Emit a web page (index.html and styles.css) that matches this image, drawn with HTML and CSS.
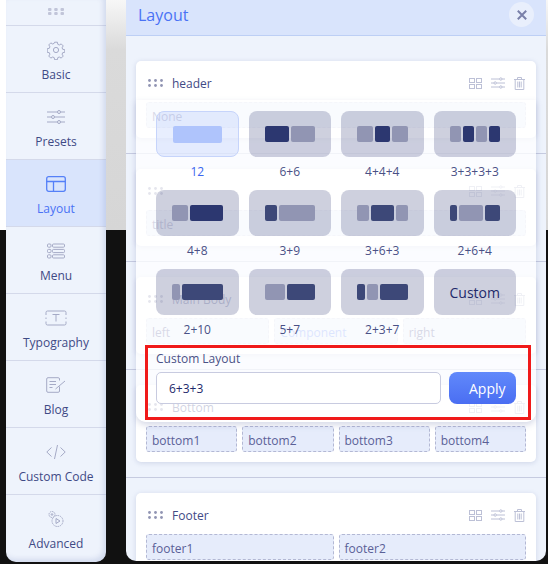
FILE: index.html
```html
<!DOCTYPE html>
<html lang="en">
<head>
    <meta charset="UTF-8">
    <title>Layout</title>
    <link rel="stylesheet" href="styles.css">
</head>
<body>
    <div class="shell">
        <nav class="sidebar">
            <div class="side-drag">
                <svg width="16" height="7" viewBox="0 0 16 7" fill="#c1c5d9"><rect width="3.5" height="3" rx="1"/><rect x="6.2" width="3.5" height="3" rx="1"/><rect x="12.5" width="3.5" height="3" rx="1"/><rect y="4" width="3.5" height="3" rx="1"/><rect x="6.2" y="4" width="3.5" height="3" rx="1"/><rect x="12.5" y="4" width="3.5" height="3" rx="1"/></svg>
            </div>
            <a class="side-item">
                <svg class="side-icon" width="18" height="18" viewBox="0 0 18 18"><path d="M7.6 1.2h2.8l.4 2.1 1.5.7 1.9-1.1 2 2-1.1 1.9.6 1.5 2.1.4v2.6l-2.1.4-.6 1.5 1.1 1.9-2 2-1.9-1.1-1.5.6-.4 2.1H7.6l-.4-2.1-1.5-.6-1.9 1.1-2-2 1.1-1.9-.6-1.5-2.1-.4V7.7l2.1-.4.6-1.5-1.1-1.9 2-2 1.9 1.1 1.5-.7z"/><circle cx="9" cy="9" r="2.6"/></svg>
                <span>Basic</span>
            </a>
            <a class="side-item">
                <svg class="side-icon" width="20" height="16" viewBox="0 0 20 16"><path d="M1 3h10.500M14.500 3H19M1 8h4.500M8.500 8H19M1 13h10.500M14.500 13H19"/><circle cx="13" cy="3" r="1.500"/><circle cx="7" cy="8" r="1.500"/><circle cx="13" cy="13" r="1.500"/></svg>
                <span>Presets</span>
            </a>
            <a class="side-item active">
                <svg class="side-icon" width="20" height="16" viewBox="0 0 20 16"><rect x=".7" y=".7" width="18.600" height="14.600" rx="2"/><path d="M.7 5.500h18.600M7.500 5.500v9.800"/></svg>
                <span>Layout</span>
            </a>
            <a class="side-item">
                <svg class="side-icon" width="18" height="16" viewBox="0 0 18 16"><rect x=".5" y="1" width="3.500" height="3.200" rx="1"/><rect x=".5" y="6.400" width="3.500" height="3.200" rx="1"/><rect x=".5" y="11.800" width="3.500" height="3.200" rx="1"/><rect x="5.500" y="1" width="12" height="3.200" rx="1"/><rect x="5.500" y="6.400" width="12" height="3.200" rx="1"/><rect x="5.500" y="11.800" width="12" height="3.200" rx="1"/></svg>
                <span>Menu</span>
            </a>
            <a class="side-item">
                <svg class="side-icon" width="22" height="16" viewBox="0 0 22 16"><path d="M1 5V2.500Q1 1 2.500 1h17Q21 1 21 2.500V5M1 7.500v1.500M21 7.500v1.500M1 11.500v2Q1 15 2.500 15h17q1.500 0 1.500-1.500v-2M7.500 4.500h7M11 4.500v7"/></svg>
                <span>Typography</span>
            </a>
            <a class="side-item">
                <svg class="side-icon" width="20" height="16" viewBox="0 0 20 16"><path d="M13.500 9.500v4.500q0 1.300-1.300 1.300H2q-1.300 0-1.300-1.300V2Q.7.700 2 .7h10.200q1.300 0 1.300 1.300v1.500M3.500 4.500h6.500M3.500 7.500h6.500M3.500 10.500h3M9.500 12l9.500-8"/></svg>
                <span>Blog</span>
            </a>
            <a class="side-item">
                <svg class="side-icon" width="20" height="16" viewBox="0 0 20 16"><path d="M5.500 3.500L.8 8l4.700 4.500M14.500 3.500L19.200 8l-4.700 4.500M11.500 1L8.500 15"/></svg>
                <span>Custom Code</span>
            </a>
            <a class="side-item">
                <svg class="side-icon" width="16" height="17" viewBox="0 0 16 17"><circle cx="4" cy="4" r="3" stroke-dasharray="1.500 .8"/><circle cx="4" cy="4" r=".8"/><circle cx="9.500" cy="10.500" r="5.500" stroke-dasharray="1.500 .8"/><path d="M8 8v5l4-2.500z"/></svg>
                <span>Advanced</span>
            </a>
        </nav>

        <main class="panel">
            <header class="panel-head">
                <h1>Layout</h1>
                <button class="close-btn" type="button">
                    <svg width="10" height="10" viewBox="0 0 10 10"><path d="M.8.800l8.400 8.400M9.200.800L.8 9.200"/></svg>
                </button>
            </header>

            <section class="section">
                <div class="card">
                    <div class="card-head">
                        <svg class="drag" width="15" height="8" viewBox="0 0 15 8"><circle cx="1.500" cy="1.500" r="1.400"/><circle cx="7.500" cy="1.500" r="1.400"/><circle cx="13.500" cy="1.500" r="1.400"/><circle cx="1.500" cy="6.500" r="1.400"/><circle cx="7.500" cy="6.500" r="1.400"/><circle cx="13.500" cy="6.500" r="1.400"/></svg>
                        <span class="card-title">header</span>
                        <div class="card-tools">
                            <svg width="13" height="11" viewBox="0 0 13 11"><rect x=".5" y=".5" width="5" height="4"/><rect x="7.500" y=".5" width="5" height="4"/><rect x=".5" y="6.500" width="5" height="4"/><rect x="7.500" y="6.500" width="5" height="4"/></svg>
                            <svg width="14" height="12" viewBox="0 0 14 12"><path d="M0 2h8.500M11 2h3M0 6h3M5.500 6H14M0 10h8.500M11 10h3"/><circle cx="9.800" cy="2" r="1.200"/><circle cx="4.200" cy="6" r="1.200"/><circle cx="9.800" cy="10" r="1.200"/></svg>
                            <svg width="11" height="13" viewBox="0 0 11 13"><path d="M0 2.500h11M3.500 2.500V.5h4v2M1.200 2.500v10h8.600v-10M3.800 4.500v6M5.500 4.500v6M7.200 4.500v6"/></svg>
                        </div>
                    </div>
                    <div class="slots"><div class="slot empty">None</div></div>
                </div>
            </section>

            <section class="section">
                <div class="card">
                    <div class="card-head">
                        <svg class="drag" width="15" height="8" viewBox="0 0 15 8"><circle cx="1.500" cy="1.500" r="1.400"/><circle cx="7.500" cy="1.500" r="1.400"/><circle cx="13.500" cy="1.500" r="1.400"/><circle cx="1.500" cy="6.500" r="1.400"/><circle cx="7.500" cy="6.500" r="1.400"/><circle cx="13.500" cy="6.500" r="1.400"/></svg>
                        <div class="card-tools">
                            <svg width="13" height="11" viewBox="0 0 13 11"><rect x=".5" y=".5" width="5" height="4"/><rect x="7.500" y=".5" width="5" height="4"/><rect x=".5" y="6.500" width="5" height="4"/><rect x="7.500" y="6.500" width="5" height="4"/></svg>
                            <svg width="14" height="12" viewBox="0 0 14 12"><path d="M0 2h8.500M11 2h3M0 6h3M5.500 6H14M0 10h8.500M11 10h3"/><circle cx="9.800" cy="2" r="1.200"/><circle cx="4.200" cy="6" r="1.200"/><circle cx="9.800" cy="10" r="1.200"/></svg>
                            <svg width="11" height="13" viewBox="0 0 11 13"><path d="M0 2.500h11M3.500 2.500V.5h4v2M1.200 2.500v10h8.600v-10M3.800 4.500v6M5.500 4.500v6M7.200 4.500v6"/></svg>
                        </div>
                    </div>
                    <div class="slots"><div class="slot empty">title</div></div>
                </div>
            </section>

            <section class="section">
                <div class="card">
                    <div class="card-head">
                        <svg class="drag" width="15" height="8" viewBox="0 0 15 8"><circle cx="1.500" cy="1.500" r="1.400"/><circle cx="7.500" cy="1.500" r="1.400"/><circle cx="13.500" cy="1.500" r="1.400"/><circle cx="1.500" cy="6.500" r="1.400"/><circle cx="7.500" cy="6.500" r="1.400"/><circle cx="13.500" cy="6.500" r="1.400"/></svg>
                        <span class="card-title">Main Body</span>
                        <div class="card-tools">
                            <svg width="13" height="11" viewBox="0 0 13 11"><rect x=".5" y=".5" width="5" height="4"/><rect x="7.500" y=".5" width="5" height="4"/><rect x=".5" y="6.500" width="5" height="4"/><rect x="7.500" y="6.500" width="5" height="4"/></svg>
                            <svg width="14" height="12" viewBox="0 0 14 12"><path d="M0 2h8.500M11 2h3M0 6h3M5.500 6H14M0 10h8.500M11 10h3"/><circle cx="9.800" cy="2" r="1.200"/><circle cx="4.200" cy="6" r="1.200"/><circle cx="9.800" cy="10" r="1.200"/></svg>
                            <svg width="11" height="13" viewBox="0 0 11 13"><path d="M0 2.500h11M3.500 2.500V.5h4v2M1.200 2.500v10h8.600v-10M3.800 4.500v6M5.500 4.500v6M7.200 4.500v6"/></svg>
                        </div>
                    </div>
                    <div class="slots">
                        <div class="slot empty">left</div>
                        <div class="slot empty component">Component</div>
                        <div class="slot empty">right</div>
                    </div>
                </div>
            </section>

            <section class="section">
                <div class="card">
                    <div class="card-head">
                        <svg class="drag" width="15" height="8" viewBox="0 0 15 8"><circle cx="1.500" cy="1.500" r="1.400"/><circle cx="7.500" cy="1.500" r="1.400"/><circle cx="13.500" cy="1.500" r="1.400"/><circle cx="1.500" cy="6.500" r="1.400"/><circle cx="7.500" cy="6.500" r="1.400"/><circle cx="13.500" cy="6.500" r="1.400"/></svg>
                        <span class="card-title">Bottom</span>
                        <div class="card-tools">
                            <svg width="13" height="11" viewBox="0 0 13 11"><rect x=".5" y=".5" width="5" height="4"/><rect x="7.500" y=".5" width="5" height="4"/><rect x=".5" y="6.500" width="5" height="4"/><rect x="7.500" y="6.500" width="5" height="4"/></svg>
                            <svg width="14" height="12" viewBox="0 0 14 12"><path d="M0 2h8.500M11 2h3M0 6h3M5.500 6H14M0 10h8.500M11 10h3"/><circle cx="9.800" cy="2" r="1.200"/><circle cx="4.200" cy="6" r="1.200"/><circle cx="9.800" cy="10" r="1.200"/></svg>
                            <svg width="11" height="13" viewBox="0 0 11 13"><path d="M0 2.500h11M3.500 2.500V.5h4v2M1.200 2.500v10h8.600v-10M3.800 4.500v6M5.500 4.500v6M7.200 4.500v6"/></svg>
                        </div>
                    </div>
                    <div class="slots">
                        <div class="slot">bottom1</div>
                        <div class="slot">bottom2</div>
                        <div class="slot">bottom3</div>
                        <div class="slot">bottom4</div>
                    </div>
                </div>
            </section>

            <section class="section">
                <div class="card">
                    <div class="card-head">
                        <svg class="drag" width="15" height="8" viewBox="0 0 15 8"><circle cx="1.500" cy="1.500" r="1.400"/><circle cx="7.500" cy="1.500" r="1.400"/><circle cx="13.500" cy="1.500" r="1.400"/><circle cx="1.500" cy="6.500" r="1.400"/><circle cx="7.500" cy="6.500" r="1.400"/><circle cx="13.500" cy="6.500" r="1.400"/></svg>
                        <span class="card-title">Footer</span>
                        <div class="card-tools">
                            <svg width="13" height="11" viewBox="0 0 13 11"><rect x=".5" y=".5" width="5" height="4"/><rect x="7.500" y=".5" width="5" height="4"/><rect x=".5" y="6.500" width="5" height="4"/><rect x="7.500" y="6.500" width="5" height="4"/></svg>
                            <svg width="14" height="12" viewBox="0 0 14 12"><path d="M0 2h8.500M11 2h3M0 6h3M5.500 6H14M0 10h8.500M11 10h3"/><circle cx="9.800" cy="2" r="1.200"/><circle cx="4.200" cy="6" r="1.200"/><circle cx="9.800" cy="10" r="1.200"/></svg>
                            <svg width="11" height="13" viewBox="0 0 11 13"><path d="M0 2.500h11M3.500 2.500V.5h4v2M1.200 2.500v10h8.600v-10M3.800 4.500v6M5.500 4.500v6M7.200 4.500v6"/></svg>
                        </div>
                    </div>
                    <div class="slots">
                        <div class="slot">footer1</div>
                        <div class="slot">footer2</div>
                    </div>
                </div>
            </section>

            <!-- layout picker popover, sits over the sections -->
            <div class="picker">
                <div class="tiles">
                    <div class="tile-wrap selected">
                        <div class="tile"><i class="span-12 soft"></i></div>
                        <span>12</span>
                    </div>
                    <div class="tile-wrap">
                        <div class="tile"><i class="span-6 deep"></i><i class="span-6 soft"></i></div>
                        <span>6+6</span>
                    </div>
                    <div class="tile-wrap">
                        <div class="tile"><i class="span-4 soft"></i><i class="span-4 deep"></i><i class="span-4 soft"></i></div>
                        <span>4+4+4</span>
                    </div>
                    <div class="tile-wrap">
                        <div class="tile"><i class="span-3 soft"></i><i class="span-3 deep"></i><i class="span-3 soft"></i><i class="span-3 deep"></i></div>
                        <span>3+3+3+3</span>
                    </div>
                    <div class="tile-wrap">
                        <div class="tile"><i class="span-4 soft"></i><i class="span-8 deep"></i></div>
                        <span>4+8</span>
                    </div>
                    <div class="tile-wrap">
                        <div class="tile"><i class="span-3 mid"></i><i class="span-9 soft"></i></div>
                        <span>3+9</span>
                    </div>
                    <div class="tile-wrap">
                        <div class="tile"><i class="span-3 soft"></i><i class="span-6 mid"></i><i class="span-3 soft"></i></div>
                        <span>3+6+3</span>
                    </div>
                    <div class="tile-wrap">
                        <div class="tile"><i class="span-2 mid"></i><i class="span-6 soft"></i><i class="span-4 mid"></i></div>
                        <span>2+6+4</span>
                    </div>
                    <div class="tile-wrap">
                        <div class="tile"><i class="span-2 soft"></i><i class="span-10 mid"></i></div>
                        <span>2+10</span>
                    </div>
                    <div class="tile-wrap">
                        <div class="tile"><i class="span-5 soft"></i><i class="span-7 mid"></i></div>
                        <span>5+7</span>
                    </div>
                    <div class="tile-wrap">
                        <div class="tile"><i class="span-2 mid"></i><i class="span-3 soft"></i><i class="span-7 mid"></i></div>
                        <span>2+3+7</span>
                    </div>
                    <div class="tile-wrap">
                        <div class="tile custom">Custom</div>
                    </div>
                </div>
                <div class="custom-label">Custom Layout</div>
                <div class="custom-row">
                    <input class="custom-input" type="text" value="6+3+3">
                    <button class="apply-btn" type="button">Apply</button>
                </div>
                <div class="callout"></div>
            </div>
        </main>
    </div>
</body>
</html>
```

FILE: styles.css
```css
* {
    box-sizing: border-box;
}

html, body {
    height: 100%;
}

body {
    margin: 0;
    overflow: hidden;
    font-family: "Open Sans", "Noto Sans", sans-serif;
    font-size: 12px;
    color: #3f4a85;
    background:
        linear-gradient(90deg, #fff 6px, transparent 6px) 0 0 / 100% 230px no-repeat,
        linear-gradient(#f7f7f7 0, #dadada 50px, #d6d6d6 230px, #111 230px);
}

.shell {
    display: flex;
    align-items: flex-start;
    gap: 20px;
    padding-left: 6px;
}

/* sidebar */
.sidebar {
    flex: none;
    width: 100px;
    height: 562px;
    overflow: hidden;
    background: #eef3fc;
    border-radius: 0 0 10px 10px;
    position: relative;
}

.sidebar::after {
    content: "";
    position: absolute;
    inset: 0;
    border-radius: 0 0 10px 10px;
    box-shadow: inset -3px -3px 5px rgba(120, 135, 190, .22);
    pointer-events: none;
}

.side-drag {
    height: 26px;
    padding-top: 8px;
    text-align: center;
    border-bottom: 1px solid #d4d9ea;
}

.side-drag svg {
    display: block;
    margin: 0 auto;
}

.side-item {
    display: flex;
    flex-direction: column;
    align-items: center;
    height: 67px;
    padding-top: 14px;
    border-bottom: 1px solid #d4d9ea;
    color: #3f4a85;
    line-height: 18px;
}

.side-item:last-child {
    border-bottom: none;
}

.side-item span {
    margin-top: 6px;
}

.side-icon {
    display: block;
    height: 20px;
    fill: none;
    stroke: #a5aac6;
    stroke-width: 1;
}

.side-item.active {
    background: #d9e4fc;
    color: #4a72f5;
}

.side-item.active .side-icon {
    stroke: #5580f8;
    stroke-width: 1.300;
}

/* main panel */
.panel {
    flex: none;
    position: relative;
    width: 420px;
    height: 561px;
    overflow: hidden;
    background: #eef3fc;
    border-radius: 0 0 10px 10px;
}

.panel-head {
    display: flex;
    align-items: center;
    justify-content: space-between;
    height: 36px;
    padding: 0 12px 6px;
    background: #d9e4fc;
    border-bottom: 1px solid #bdcff5;
}

.panel-head h1 {
    margin: 0;
    font-size: 16px;
    line-height: 22px;
    font-weight: 400;
    color: #4a72f5;
}

.close-btn {
    display: flex;
    align-items: center;
    justify-content: center;
    width: 25px;
    height: 25px;
    padding: 0;
    border: none;
    border-radius: 50%;
    background: #e9effc;
}

.close-btn svg {
    fill: none;
    stroke: #7a80a9;
    stroke-width: 2;
}

.section {
    padding: 15px 10px;
    border-bottom: 1px solid #c6cbe0;
}

.panel-head + .section {
    padding-top: 25px;
}

.section:last-of-type {
    border-bottom: none;
}

.card {
    height: 77px;
    padding: 0 10px;
    background: #fff;
    border-radius: 5px;
    box-shadow: 0 1px 5px rgba(90, 105, 160, .22);
}

.card-head {
    display: flex;
    align-items: center;
    height: 41px;
    padding: 3px 1px 0 2px;
}

.drag {
    fill: #9195b3;
}

.card-title {
    margin-left: 9px;
    color: #3f4a85;
}

.card-tools {
    display: flex;
    align-items: center;
    gap: 9px;
    margin-left: auto;
}

.card-tools svg {
    fill: none;
    stroke: #bcc0d6;
    stroke-width: 1;
}

.slots {
    display: flex;
    gap: 5px;
}

.slot {
    flex: 1 1 0;
    height: 26px;
    padding: 2px 5px 0;
    line-height: 24px;
    color: #5a6097;
    background: #e6ecfb;
    border: 1px dashed #b3b8d4;
    border-radius: 3px;
}

.slot.empty {
    border-color: #d4d8ea;
}

/* popover */
.picker {
    position: absolute;
    top: 100px;
    left: 10px;
    width: 400px;
    height: 322px;
    padding: 11px 20px 0;
    background: rgba(255, 255, 255, .76);
    border-radius: 0 0 10px 10px;
    box-shadow: 0 3px 6px rgba(90, 105, 160, .25);
}

.tiles {
    display: grid;
    grid-template-columns: repeat(4, 1fr);
    gap: 0 10px;
}

.tile-wrap {
    height: 79px;
    text-align: center;
    color: #4a5186;
    line-height: 18px;
}

.tile-wrap span {
    display: block;
    margin-top: 6px;
}

.tile {
    display: flex;
    align-items: center;
    justify-content: center;
    gap: 2px;
    height: 46px;
    padding: 0 16px;
    background: rgba(44, 53, 113, .23);
    border-radius: 8px;
}

.tile i {
    display: block;
    height: 16px;
    border-radius: 2px;
}

.tile.custom {
    padding-top: 2px;
    font-size: 14px;
    color: #1e2a6b;
}

.span-2 { flex: 2 1 0; }
.span-3 { flex: 3 1 0; }
.span-4 { flex: 4 1 0; }
.span-5 { flex: 5 1 0; }
.span-6 { flex: 6 1 0; }
.span-7 { flex: 7 1 0; }
.span-8 { flex: 8 1 0; }
.span-9 { flex: 9 1 0; }
.span-10 { flex: 10 1 0; }
.span-12 { flex: 12 1 0; }

.deep { background: #2c3770; }
.mid { background: #3d4878; }
.soft { background: #9195b3; }

.selected {
    color: #3a66f0;
}

.selected .tile {
    background: rgba(80, 120, 245, .13);
    border: 1px solid #c6d4fb;
}

.selected .tile .soft {
    height: 17px;
    background: #afc4fc;
}

.custom-label {
    margin-top: 2px;
    line-height: 18px;
    color: #4a5186;
}

.custom-row {
    display: flex;
    gap: 8px;
    margin-top: 4px;
}

.custom-input {
    flex: 1;
    min-width: 0;
    height: 32px;
    padding: 0 12px;
    font: inherit;
    color: #1e2a6b;
    background: #fff;
    border: 1px solid #c8cbe0;
    border-radius: 5px;
}

.apply-btn {
    flex: none;
    width: 67px;
    height: 32px;
    padding: 0 0 0 20px;
    font: inherit;
    font-size: 14px;
    text-align: left;
    color: #fff;
    background: linear-gradient(#6189fb, #4a6ef2);
    border: none;
    border-radius: 8px;
}

.callout {
    position: absolute;
    top: 245px;
    left: 9px;
    width: 386px;
    height: 75px;
    border: 3px solid #f01a1a;
    pointer-events: none;
}

.component {
    color: #6f93f8;
}
```
